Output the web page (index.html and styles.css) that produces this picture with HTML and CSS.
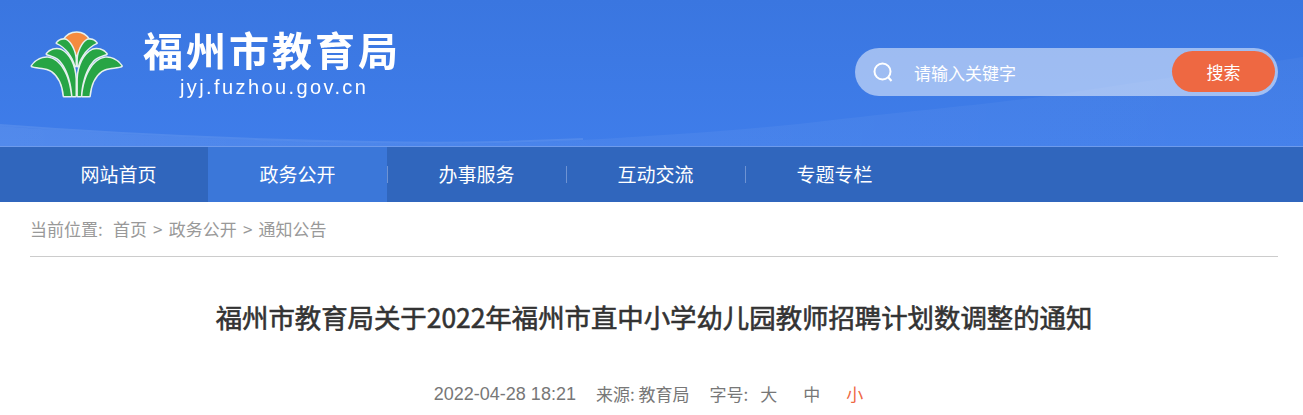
FILE: index.html
```html
<!DOCTYPE html>
<html lang="zh-CN">
<head>
    <meta charset="UTF-8">
    <meta name="viewport" content="width=device-width, initial-scale=1.0">
    <title>福州市教育局</title>
    <link rel="stylesheet" href="styles.css">
</head>
<body>
    <header class="header">
        <svg class="header-wave" viewBox="0 0 1303 146" preserveAspectRatio="none" aria-hidden="true">
            <defs>
                <linearGradient id="waveFade" x1="0" y1="0" x2="1" y2="0">
                    <stop offset="0" stop-color="#ffffff" stop-opacity="0.1"/>
                    <stop offset="0.45" stop-color="#ffffff" stop-opacity="0.05"/>
                    <stop offset="1" stop-color="#ffffff" stop-opacity="0.03"/>
                </linearGradient>
            </defs>
            <path d="M0 126C130 136 260 141 375 143C450 145 520 143 583 140C670 135 760 129 833 120C910 111 970 106 1040 97C1130 84 1220 70 1303 57V146H0Z" fill="url(#waveFade)"/>
            <path d="M0 125C130 135 260 140 375 142C450 144 520 142 583 139" fill="none" stroke="#ffffff" stroke-opacity="0.1" stroke-width="2"/>
        </svg>
        <div class="logo">
            <svg class="logo-mark" viewBox="0 0 94 70" aria-hidden="true">
                <defs>
                    <g id="leaves">
                        <path d="M2 37C6 31 13 28 19 29C30 31 39 46 41 67L34 67C33 56 29 47 22 42C16 38 8 39 2 37Z"/>
                        <path d="M17 25C20 21 26 19 31 21C39 25 45 36 45.500 50L45.500 67L42.500 67C41.500 50 35 34 27 29C24 27 20 26 17 25Z"/>
                        <path d="M27 14C29 11 33 10 36 11C41 14 45 22 45.500 30L45.500 37C43 27 36 18 27 14Z"/>
                    </g>
                    <g id="halfMark">
                        <use href="#leaves" fill="#e6f1ee" stroke="#e6f1ee" stroke-width="3" stroke-linejoin="round"/>
                        <use href="#leaves" fill="#27a545"/>
                    </g>
                </defs>
                <path d="M33 11C36 6 41 3 46.700 3C52 3 57 6 60 11L61 13C54 15 49 21 46.700 28C44 21 39 15 32 13Z" fill="#f58b3f" stroke="#e6f1ee" stroke-width="1.500" stroke-linejoin="round"/>
                <use href="#halfMark"/>
                <use href="#halfMark" transform="matrix(-1 0 0 1 93.400 0)"/>
            </svg>
            <div class="logo-text">
                <div class="logo-name">福州市教育局</div>
                <div class="logo-domain">jyj.fuzhou.gov.cn</div>
            </div>
        </div>
        <form class="search">
            <svg class="search-icon" viewBox="0 0 20 20" aria-hidden="true">
                <circle cx="9.500" cy="9.500" r="8" fill="none" stroke="#ffffff" stroke-width="2"/>
                <path d="M15 15L18.500 19" fill="none" stroke="#ffffff" stroke-width="2"/>
            </svg>
            <span class="search-input">请输入关键字</span>
            <button class="search-btn" type="button">搜索</button>
        </form>
    </header>

    <nav class="nav">
        <a class="nav-item" href="#">网站首页</a>
        <a class="nav-item active" href="#">政务公开</a>
        <a class="nav-item" href="#">办事服务</a>
        <a class="nav-item" href="#">互动交流</a>
        <a class="nav-item last" href="#">专题专栏</a>
    </nav>

    <div class="container">
        <div class="crumb">
            <span class="crumb-label">当前位置:</span>
            <a href="#">首页</a>
            <span class="crumb-sep">&gt;</span>
            <a href="#">政务公开</a>
            <span class="crumb-sep">&gt;</span>
            <a href="#">通知公告</a>
        </div>
        <h1 class="title">福州市教育局关于2022年福州市直中小学幼儿园教师招聘计划数调整的通知</h1>
        <div class="meta">
            <span class="meta-date">2022-04-28 18:21</span>
            <span>来源: 教育局</span>
            <span class="size-switch">
                <span class="size-label">字号:</span>
                <a href="#">大</a>
                <a href="#">中</a>
                <a class="current" href="#">小</a>
            </span>
        </div>
    </div>
</body>
</html>
```

FILE: styles.css
```css
* {
    box-sizing: border-box;
}
html, body {
    height: 415px;
    overflow: hidden;
}
body {
    margin: 0;
    font-family: "Noto Sans CJK SC", "Liberation Sans", sans-serif;
    background-color: white;
}
a {
    color: inherit;
    text-decoration: none;
}
.header {
    position: relative;
    display: flex;
    justify-content: space-between;
    height: 146px;
    padding: 0 25px 0 30px;
    background-color: #3c79e4;
    background-image: linear-gradient(#3a76e0, #3f7dea);
}
.header-wave {
    position: absolute;
    left: 0;
    top: 0;
    width: 100%;
    height: 146px;
}
.logo {
    position: relative;
    display: flex;
    gap: 19px;
    padding-top: 29px;
}
.logo-mark {
    width: 94px;
    height: 70px;
    filter: blur(0.3px);
}
.logo-text {
    color: white;
    filter: blur(0.3px);
}
.logo-name {
    margin-top: -3px;
    font-size: 40px;
    font-weight: 700;
    letter-spacing: 3px;
    line-height: 46px;
}
.logo-domain {
    margin-top: 4px;
    padding-left: 37px;
    font-family: "Liberation Sans", sans-serif;
    font-size: 20px;
    letter-spacing: 2.400px;
    line-height: 22px;
}
.search {
    position: relative;
    display: flex;
    align-items: center;
    width: 423px;
    height: 48px;
    margin-top: 48px;
    padding: 0 3px 0 18px;
    border-radius: 24px;
    background-color: rgba(255, 255, 255, 0.5);
}
.search-icon {
    width: 20px;
    height: 20px;
}
.search-input {
    flex: 1;
    margin-left: 21px;
    color: white;
    font-size: 17px;
}
.search-btn {
    width: 103px;
    height: 41px;
    margin-top: -1px;
    border: none;
    border-radius: 21px;
    background-color: #ee6842;
    color: white;
    font-family: inherit;
    font-size: 17px;
}
.nav {
    display: flex;
    height: 56px;
    padding-left: 29px;
    border-top: 1px solid #6e9bec;
    background-color: #3066bd;
}
.nav-item {
    position: relative;
    width: 179px;
    color: white;
    font-size: 19px;
    line-height: 54px;
    text-align: center;
}
.nav-item:nth-child(n+2):not(.last)::after {
    content: "";
    position: absolute;
    right: -1px;
    top: 19px;
    width: 1px;
    height: 17px;
    background-color: #6e93d3;
}
.nav-item.active {
    background-color: #3b77d9;
}
.container {
    padding: 0 25px 0 30px;
}
.crumb {
    display: flex;
    gap: 6.200px;
    height: 55px;
    border-bottom: 1px solid #ccc;
    color: #999;
    font-size: 17px;
    line-height: 54px;
}
.crumb-label {
    margin-right: 4px;
}
.title {
    margin: 37px 0 0;
    color: #333;
    font-size: 26.400px;
    font-weight: 400;
    -webkit-text-stroke: 0.6px #333;
    line-height: 46px;
    text-align: center;
}
.meta {
    display: flex;
    justify-content: center;
    gap: 20px;
    margin-top: 41px;
    padding-right: 11px;
    color: #777;
    font-size: 17px;
    line-height: 26px;
}
.meta-date {
    font-family: "Liberation Sans", sans-serif;
    font-size: 18px;
}
.size-switch {
    display: flex;
    gap: 26px;
}
.size-label {
    margin-right: -14px;
}
.size-switch .current {
    color: #ee6842;
}
```
